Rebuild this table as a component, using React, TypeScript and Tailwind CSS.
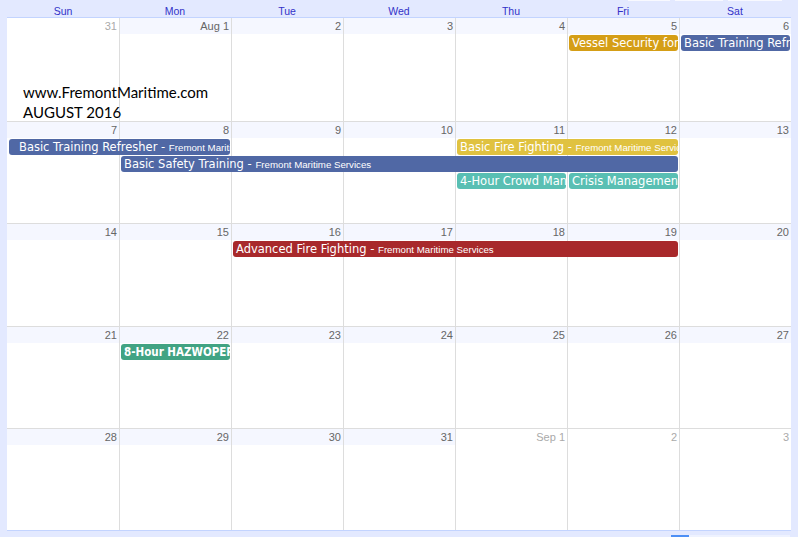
type Day = { label: string; other?: boolean }
type Ev = { pos: string; color: string; title: string; sub?: string; cont?: boolean; bold?: boolean }
type Week = { h: string; days: Day[]; events: Ev[] }

const colStart = ['col-start-1', 'col-start-2', 'col-start-3', 'col-start-4', 'col-start-5', 'col-start-6', 'col-start-7']
const names = ['Sun', 'Mon', 'Tue', 'Wed', 'Thu', 'Fri', 'Sat']
const fms = 'Fremont Maritime Services'

const weeks: Week[] = [
  {
    h: 'h-[104px]',
    days: [{ label: '31', other: true }, { label: 'Aug 1' }, { label: '2' }, { label: '3' }, { label: '4' }, { label: '5' }, { label: '6' }],
    events: [
      { pos: 'col-start-6 col-span-1 row-start-2', color: 'bg-[#d59e16]', title: 'Vessel Security for Vessel Personnel', sub: fms },
      { pos: 'col-start-7 col-span-1 row-start-2', color: 'bg-[#5068a5]', title: 'Basic Training Refresher', sub: fms },
    ],
  },
  {
    h: 'h-[102px]',
    days: [{ label: '7' }, { label: '8' }, { label: '9' }, { label: '10' }, { label: '11' }, { label: '12' }, { label: '13' }],
    events: [
      { pos: 'col-start-1 col-span-2 row-start-2', color: 'bg-[#5068a5]', title: 'Basic Training Refresher', sub: fms, cont: true },
      { pos: 'col-start-5 col-span-2 row-start-2', color: 'bg-[#e0c240]', title: 'Basic Fire Fighting', sub: fms },
      { pos: 'col-start-2 col-span-5 row-start-3', color: 'bg-[#5068a5]', title: 'Basic Safety Training', sub: fms },
      { pos: 'col-start-5 col-span-1 row-start-4', color: 'bg-[#59bfb3]', title: '4-Hour Crowd Management', sub: fms },
      { pos: 'col-start-6 col-span-1 row-start-4', color: 'bg-[#59bfb3]', title: 'Crisis Management', sub: fms },
    ],
  },
  {
    h: 'h-[103px]',
    days: [{ label: '14' }, { label: '15' }, { label: '16' }, { label: '17' }, { label: '18' }, { label: '19' }, { label: '20' }],
    events: [
      { pos: 'col-start-3 col-span-4 row-start-2', color: 'bg-[#a8292b]', title: 'Advanced Fire Fighting', sub: fms },
    ],
  },
  {
    h: 'h-[102px]',
    days: [{ label: '21' }, { label: '22' }, { label: '23' }, { label: '24' }, { label: '25' }, { label: '26' }, { label: '27' }],
    events: [
      { pos: 'col-start-2 col-span-1 row-start-2', color: 'bg-[#41a383]', title: '8-Hour HAZWOPER', bold: true },
    ],
  },
  {
    h: 'h-[102px]',
    days: [{ label: '28' }, { label: '29' }, { label: '30' }, { label: '31' }, { label: 'Sep 1', other: true }, { label: '2', other: true }, { label: '3', other: true }],
    events: [],
  },
]

function EventBar({ ev }: { ev: Ev }) {
  const face = ev.bold
    ? "font-['DejaVu_Sans_Condensed','DejaVu_Sans',sans-serif] font-bold"
    : "font-['DejaVu_Sans',sans-serif]"
  return (
    <div
      className={`${ev.pos} ${ev.color} ${face} ml-[2px] mr-[1px] h-[16px] overflow-hidden whitespace-nowrap rounded-[3px] text-[11.5px] leading-[16px] text-white ${ev.cont ? 'pl-[10px]' : 'pl-[3px]'}`}
    >
      {ev.title}
      {ev.sub && (
        <>
          {' - '}
          <span className="font-['Liberation_Sans',Arial,sans-serif] text-[9.7px] leading-none">{ev.sub}</span>
        </>
      )}
    </div>
  )
}

export default function App() {
  return (
    <div className="relative h-[537px] w-[798px] overflow-hidden bg-[#e3e9ff] px-[7px] font-['Liberation_Sans',Arial,sans-serif]">
      {/* cut-off toolbar buttons above */}
      <div className="flex h-px">
        <div className="ml-[621px] w-[42px] bg-[#f8f9ff]" />
        <div className="ml-[5px] w-[48px] bg-[#f8f9ff]" />
        <div className="ml-[5px] w-[54px] bg-[#f8f9ff]" />
      </div>

      <div className="grid h-[17px] grid-cols-7 border-b border-[#c3d4ff]">
        {names.map((n) => (
          <div key={n} className="pt-[4px] text-center text-[10.5px] leading-[12px] text-[#3232c8]">
            {n}
          </div>
        ))}
      </div>

      <div className="flex flex-col">
        {weeks.map((w, wi) => (
          <div
            key={wi}
            className={`grid grid-cols-7 grid-rows-[17px_17px_17px_17px_1fr] border-b ${w.h} ${wi === weeks.length - 1 ? 'border-[#c3d4ff]' : 'border-[#dddddd]'}`}
          >
            {w.days.map((d, i) => (
              <div key={i} className={`row-span-full ${colStart[i]} bg-white ${i > 0 ? 'border-l border-[#dddddd]' : ''}`}>
                <div
                  className={`h-[16px] pr-[2px] text-right text-[11px] leading-[16px] ${d.other ? 'bg-white text-[#aaaaaa]' : 'bg-[#f5f7ff] text-[#666666]'}`}
                >
                  {d.label}
                </div>
              </div>
            ))}
            {w.events.map((ev, ei) => (
              <EventBar key={ei} ev={ev} />
            ))}
          </div>
        ))}
      </div>

      <div className="flex h-[6px] items-end">
        <div className="ml-[664px] h-[2px] w-[18px] bg-[#4d8ff5]" />
        <div className="h-[2px] w-[101px] bg-[#eef2ff]" />
      </div>

      {/* watermark text over the first week */}
      <div className="absolute left-[23px] top-[82px] font-['Lato',sans-serif] text-[15px] leading-[20px] text-black">
        <div>www.FremontMaritime.com</div>
        <div>AUGUST 2016</div>
      </div>
    </div>
  )
}
